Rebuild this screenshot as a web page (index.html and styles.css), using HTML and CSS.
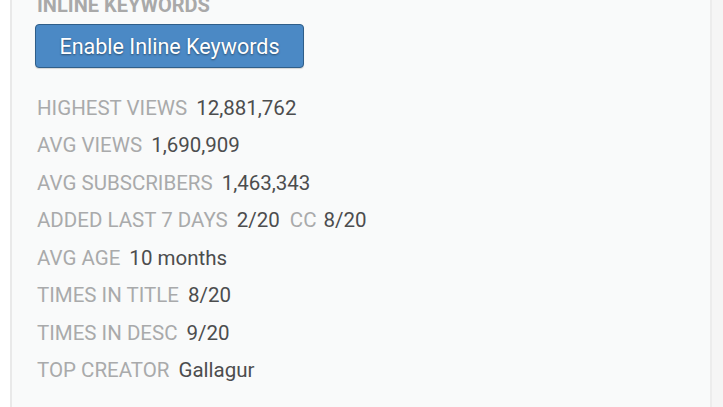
FILE: index.html
```html
<!DOCTYPE html>
<html>
<head>
<meta charset="utf-8">
<link rel="stylesheet" href="styles.css">
</head>
<body>
<div class="page">
  <div class="panel">
    <div class="title">INLINE KEYWORDS</div>
    <button class="btn">Enable Inline Keywords</button>
    <div class="stats">
      <div class="row"><span class="label">HIGHEST VIEWS</span><span class="value">12,881,762</span></div>
      <div class="row"><span class="label">AVG VIEWS</span><span class="value">1,690,909</span></div>
      <div class="row"><span class="label">AVG SUBSCRIBERS</span><span class="value">1,463,343</span></div>
      <div class="row"><span class="label">ADDED LAST 7 DAYS</span><span class="value">2/20</span><span class="label cc">CC</span><span class="value">8/20</span></div>
      <div class="row"><span class="label">AVG AGE</span><span class="value">10 months</span></div>
      <div class="row"><span class="label">TIMES IN TITLE</span><span class="value">8/20</span></div>
      <div class="row"><span class="label">TIMES IN DESC</span><span class="value">9/20</span></div>
      <div class="row"><span class="label">TOP CREATOR</span><span class="value">Gallagur</span></div>
    </div>
  </div>
</div>
</body>
</html>
```
FILE: styles.css
```css
* { box-sizing: border-box; }
html, body { margin: 0; padding: 0; }
body {
  background: #ffffff;
  font-family: Roboto, "Liberation Sans", sans-serif;
  width: 723px;
  height: 407px;
  overflow: hidden;
}
.page {
  display: flex;
  height: 407px;
  padding-left: 10px;
  background: linear-gradient(to right, #ffffff 0, #ffffff 712px, #f5f5f5 712px);
}
.panel {
  width: 702px;
  height: 415px;
  background: #f9fafa;
  border-left: 2px solid #e9e9e9;
  border-right: 2px solid #ececec;
  padding-left: 25px;
  margin-top: -7px;
}
.title {
  font-size: 20px;
  font-weight: 700;
  color: #a9a9a9;
  line-height: 24px;
}
.btn {
  display: block;
  margin-top: 7px;
  height: 44px;
  width: 269px;
  margin-left: -2px;
  background: #4b89c5;
  border: 1px solid #2f5e89;
  border-radius: 4px;
  color: #ffffff;
  font-family: Roboto, "Liberation Sans", sans-serif;
  font-size: 21.5px;
  text-shadow: 0 1px 2px rgba(0,0,0,0.45);
  padding: 0;
  box-shadow: 0 1px 1px rgba(0,0,0,0.15);
}
.stats {
  margin-top: 21.5px;
  display: flex;
  flex-direction: column;
}
.row {
  display: flex;
  align-items: baseline;
  height: 37.5px;
  line-height: 37.5px;
  font-size: 20.5px;
}
.label {
  color: #a9aaab;
  margin-right: 9px;
}
.cc { margin-left: 10px; margin-right: 7px; }
.value {
  color: #4c4d4e;
}
```
